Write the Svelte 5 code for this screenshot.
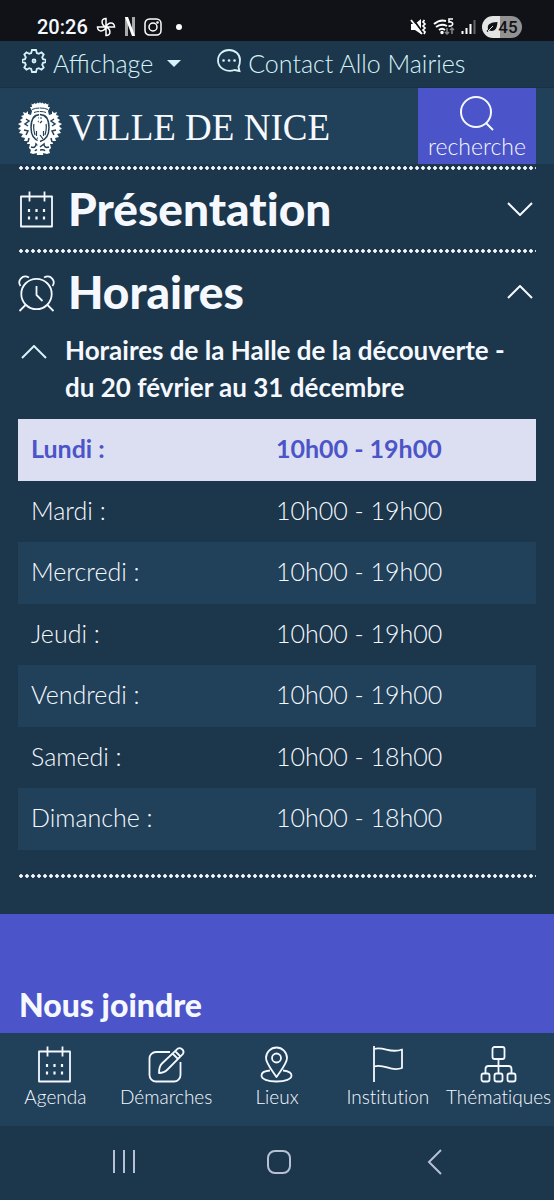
<script>
	let showPresentation = $state(false);
	let showHours = $state(true);
	let showPeriod = $state(true);

	const hours = [
		{ day: 'Lundi', time: '10h00 - 19h00', today: true },
		{ day: 'Mardi', time: '10h00 - 19h00' },
		{ day: 'Mercredi', time: '10h00 - 19h00' },
		{ day: 'Jeudi', time: '10h00 - 19h00' },
		{ day: 'Vendredi', time: '10h00 - 19h00' },
		{ day: 'Samedi', time: '10h00 - 18h00' },
		{ day: 'Dimanche', time: '10h00 - 18h00' }
	];

	const links = [
		{ name: 'Agenda', icon: 'calendar' },
		{ name: 'Démarches', icon: 'edit' },
		{ name: 'Lieux', icon: 'pin' },
		{ name: 'Institution', icon: 'flag' },
		{ name: 'Thématiques', icon: 'tree' }
	];
</script>

{#snippet icon(name)}
	<svg class="icon" viewBox="0 0 38 38" aria-hidden="true">
		{#if name === 'calendar'}
			<path d="M3 6.500h31v30H3zM11.500 1.500v10M26.500 1.500v10" />
			<path stroke-width="2.200" d="M11 19v3M18.500 19v3M26 19v3M11 26.500v3M18.500 26.500v3M26 26.500v3" />
		{:else if name === 'clock'}
			<circle cx="18.500" cy="21" r="15.200" />
			<path d="M18.500 13v9l6 6M7.500 32l-6 6M29.500 32l6 6M2.500 13C-1 8 4 1 11 4.500M34.500 13C38 8 33 1 26 4.500" />
		{:else if name === 'edit'}
			<path d="M23 7H9a6.500 6.500 0 0 0-6.500 6.500V30A6.500 6.500 0 0 0 9 36.500h18a6.500 6.500 0 0 0 6.500-6.500V17" />
			<path d="M12 28c0-5 .500-7 3-9.500L30.500 3.800c3-2 7.500 1.500 5.500 5L20.500 24.500C18 27 16 28 12 28zM25.500 8.500l5.500 5.500M28 6l5.500 5.500" />
		{:else if name === 'pin'}
			<path d="M18.500 32C14 25 8 18.500 8 13a10.500 10.500 0 0 1 21 0c0 5.500-6 12-10.500 19z" />
			<circle cx="18.500" cy="13" r="4.500" />
			<path d="M12 25.500C6 26 3.500 28 3.500 30.500c0 3.500 6 6 15 6s15-2.500 15-6c0-2.500-3-4.500-8.500-5" />
		{:else if name === 'flag'}
			<path d="M5 1v36M5 4c10-3 16 5 28 .500v18.500C21 27.500 16 18 5 21.500" />
		{:else if name === 'tree'}
			<rect x="12.500" y="2" width="12" height="12" rx="2" />
			<rect x="1.500" y="28.500" width="8" height="8" rx="2" />
			<rect x="14.500" y="28.500" width="8" height="8" rx="2" />
			<rect x="27.500" y="28.500" width="8" height="8" rx="2" />
			<path d="M18.500 14v14.500M5.500 28.500V24q0-3 3-3h20q3 0 3 3v4.500" />
		{/if}
	</svg>
{/snippet}

{#snippet chevron(open)}
	<svg class="chevron" class:open viewBox="0 0 26 14" aria-hidden="true"><path d="M1 1l12 12L25 1" /></svg>
{/snippet}

{#snippet crestHalf()}
	<path fill="#fff" d="M22.200 0l-1.200 1.500L19.500.500 18 2 16.500 1 15 2.500 13.500 1.500 14 5l-2 0 2 4-1 4-3-1 0-3-2 2-3-1 1 3-3 1 2 2-3 2 2 2-4 2 3 2-3 3 3 1-2 3 4 1-2 3 4 1-1 3 4 0-1 3 3 0-1 4 2 2-1 3 3 1 4-1 3 2h3.200z" />
	<path class="cut" d="M22 6q-5 0-8 1.500M22 9.500q-4 0-6 1M18 12.500l-3 3" />
	<path class="cut" stroke-width="1.500" d="M8 17l3 2-4 3 3 2M6 28l4 1-2 4M11 36l-1 4" />
	<path class="cut" stroke-width="1.500" d="M22 12.500C16 13 13 18 13 25.500S16 38 22 39.500" />
	<path class="cut" stroke-width="1.200" d="M16 22c-1 4 0 7 1 11M18.500 29v5M22 33l-3 4M20 19l2 2M22 16h-2" />
	<path class="cut" stroke-width="1.500" d="M13 45c3 1 5 0 5-3l4 3M22 48c-3 0-4-1-5 1" />
{/snippet}

<div class="page">
	<div class="status">
		<span class="time">20:26</span>
		<svg width="20" height="20" viewBox="0 0 20 20" fill="none" stroke="#fff" stroke-width="1.500" aria-hidden="true">
			<path d="M10 10V1.500C4.500 1.500 5 8 10 10zM10 10h8.500C18.500 4.500 12 5 10 10zM10 10v8.500C15.500 18.500 15 12 10 10zM10 10H1.500C1.500 15.500 8 15 10 10z" />
		</svg>
		<svg width="12" height="19" viewBox="0 0 12 19" aria-hidden="true">
			<path fill="#aaa" d="M1 0h3v19H1zM8 0h3v19H8z" /><path fill="#fff" d="M1 0h3l7 19H8z" />
		</svg>
		<svg width="18" height="18" viewBox="0 0 18 18" fill="none" stroke="#fff" stroke-width="1.500" aria-hidden="true">
			<rect x="1" y="1" width="16" height="16" rx="4.500" /><circle cx="9" cy="9" r="4" /><circle cx="13.500" cy="4.500" r=".6" />
		</svg>
		<span class="more"></span>
		<div class="signals">
			<svg width="17" height="18" viewBox="0 0 17 18" aria-hidden="true">
				<path fill="#fff" d="M1 6h4l6-5v15l-6-4H1z" />
				<path stroke="#111217" stroke-width="2" d="M3 1l10 14" /><path stroke="#fff" stroke-width="1.800" d="M1 2l11 14" />
				<path fill="none" stroke="#fff" stroke-width="1.700" d="M14.500 2l-1.500 2 2 2-2 2 2 2-2 2 2 2-1 2" />
			</svg>
			<svg width="22" height="18" viewBox="0 0 22 18" fill="none" stroke="#fff" stroke-width="1.900" aria-hidden="true">
				<path d="M1 6q6-5 12-3M3 9q5-4 11-1M6 12q3-2.500 6 0" /><circle cx="9" cy="14.500" r=".8" fill="#fff" />
				<path stroke-width="1.600" d="M20 1h-4v3c5-1 5 5-.500 4" />
				<path stroke="#888" stroke-width="1.500" d="M14 10v6m-2-2 2 2 2-2M19 16v-6m-2 2 2-2 2 2" />
			</svg>
			<svg width="15" height="16" viewBox="0 0 15 16" stroke="#fff" stroke-width="2" aria-hidden="true">
				<path d="M1.500 12v3M5.500 9v6M9.500 5v10" /><path stroke="#666" d="M13.500 1v14" />
			</svg>
			<span class="battery">
				<svg width="12" height="12" viewBox="0 0 12 12" aria-hidden="true"><path fill="#111217" d="M11.500 1C11 9 8 11 3 9.500L1.500 11 .500 10 2 8.500C1 3 4 1.500 11.500 1z" /><path stroke="#ddd" fill="none" d="M2 10l5-5" /></svg>45</span>
		</div>
	</div>

	<div class="topbar">
		<button class="display">
			<svg width="24" height="24" viewBox="0 0 24 24" aria-hidden="true">
				<path d="M10 1h4l.8 3 2 .8 2.700-1.500 2.200 2.200-1.500 2.700.8 2 3 .8v2l-3 .8-.8 2 1.500 2.700-2.200 2.200-2.700-1.500-2 .8-.8 3h-4l-.8-3-2-.8-2.700 1.500-2.200-2.200 1.500-2.700-.8-2-3-.8v-2l3-.8.8-2-1.500-2.700 2.200-2.200 2.700 1.500 2-.8z" />
				<circle cx="12" cy="12" r="1.500" />
			</svg>
			Affichage
			<span class="caret"></span>
		</button>
		<a class="contact" href="#contact">
			<svg width="24" height="24" viewBox="0 0 24 24" aria-hidden="true">
				<path d="M22.500 22l-5-1C10 23.500 1 19.500 1 11.500 1 5 6 1 12 1s11 4 11 10c0 3-.500 5-1.500 7z" />
				<path stroke-width="2.600" stroke-linecap="round" d="M6.500 11.500h.1M12 11.500h.1M17.500 11.500h.1" />
			</svg>
			Contact Allo Mairies
		</a>
	</div>

	<header>
		<a class="logo" href="#accueil">
			<svg width="44" height="53" viewBox="0 0 44 53" aria-hidden="true">
				{@render crestHalf()}
				<g transform="translate(44 0) scale(-1 1)">
					{@render crestHalf()}
				</g>
			</svg>
			<span>VILLE DE NICE</span>
		</a>
		<button class="search">
			<svg width="36" height="36" viewBox="0 0 36 36" aria-hidden="true"><circle cx="17" cy="16" r="15" /><path d="M27 27l7 7" /></svg>
			recherche
		</button>
	</header>

	<main>
		<section>
			<h2>
				<button class="title" aria-expanded={showPresentation} onclick={() => (showPresentation = !showPresentation)}>
					{@render icon('calendar')}
					<span>Présentation</span>
					{@render chevron(showPresentation)}
				</button>
			</h2>
		</section>
		<section class="hours">
			<h2>
				<button class="title" aria-expanded={showHours} onclick={() => (showHours = !showHours)}>
					{@render icon('clock')}
					<span>Horaires</span>
					{@render chevron(showHours)}
				</button>
			</h2>
			{#if showHours}
				<h3>
					<button class="period" aria-expanded={showPeriod} onclick={() => (showPeriod = !showPeriod)}>
						{@render chevron(showPeriod)}
						<span>Horaires de la Halle de la découverte - du 20 février au 31 décembre</span>
					</button>
				</h3>
				{#if showPeriod}
					<table>
						<tbody>
							{#each hours as row}
								<tr class:today={row.today}>
									<th scope="row">{row.day} :</th>
									<td>{row.time}</td>
								</tr>
							{/each}
						</tbody>
					</table>
				{/if}
			{/if}
		</section>
	</main>

	<div class="join">
		<h2>Nous joindre</h2>
	</div>

	<nav class="links">
		{#each links as link}
			<a href="#{link.icon}">
				{@render icon(link.icon)}
				<span>{link.name}</span>
			</a>
		{/each}
	</nav>

	<div class="system">
		<button aria-label="Applications récentes">
			<svg width="26" height="26" viewBox="0 0 26 26" aria-hidden="true"><path d="M4 1v23M14 1v23M24 1v23" /></svg>
		</button>
		<button aria-label="Accueil">
			<svg width="26" height="26" viewBox="0 0 26 26" aria-hidden="true"><rect x="2" y="2" width="22" height="22" rx="7" /></svg>
		</button>
		<button aria-label="Retour">
			<svg width="26" height="26" viewBox="0 0 26 26" aria-hidden="true"><path d="M19 1L7 13l12 12" /></svg>
		</button>
	</div>
</div>

<style>
	:global(body) {
		margin: 0;
		background: #1c364b;
	}

	.page {
		font-family: Lato, "Open Sans", sans-serif;
		font-size: 25px;
		font-weight: 300;
		color: #f5f9ff;
		background: #1c364b;
	}

	button {
		padding: 0;
		border: 0;
		background: none;
		font: inherit;
		color: inherit;
		cursor: pointer;
	}

	a {
		color: inherit;
		text-decoration: none;
	}

	h2,
	h3 {
		margin: 0;
		font: inherit;
	}

	svg {
		display: block;
		flex: none;
	}

	.status {
		display: flex;
		align-items: center;
		gap: 8px;
		height: 29px;
		padding: 12px 32px 0 37px;
		background: #111217;
	}

	.time {
		font: 500 20px/28px Roboto, sans-serif;
	}

	.more {
		width: 6px;
		height: 6px;
		margin-left: 6px;
		border-radius: 50%;
		background: #fff;
	}

	.signals {
		display: flex;
		align-items: center;
		gap: 6px;
		margin-left: auto;
	}

	.battery {
		display: flex;
		align-items: center;
		justify-content: center;
		width: 40px;
		height: 22px;
		border-radius: 11px;
		background: linear-gradient(90deg, #e4e4e4 45%, #929292 45%);
		color: #111217;
		font: 500 17px/22px Roboto, sans-serif;
	}

	.topbar {
		display: flex;
		gap: 36px;
		height: 44px;
		padding: 0 0 2px 22px;
		border-bottom: 1px solid #1a3145;
		color: #d5f3fa;
	}

	.display,
	.contact {
		display: flex;
		align-items: center;
		gap: 7px;
	}

	.topbar svg {
		margin-bottom: 4px;
	}

	.topbar svg,
	.search svg {
		fill: none;
		stroke: currentColor;
		stroke-width: 1.8;
	}

	.caret {
		margin-left: 7px;
		border: 7px solid transparent;
		border-top-color: currentColor;
		border-bottom: 0;
	}

	header {
		display: flex;
		justify-content: space-between;
		padding: 0 18px;
		background: #214059;
	}

	.logo {
		display: flex;
		align-items: center;
		gap: 7px;
		padding-top: 4px;
		font: 37px/50px "Liberation Serif", serif;
	}

	.cut {
		fill: none;
		stroke: #214059;
	}

	.search {
		display: flex;
		flex-direction: column;
		align-items: center;
		width: 118px;
		height: 76px;
		padding-top: 8px;
		background: #4b54c8;
		font-size: 23px;
		line-height: 28px;
	}

	.search svg {
		stroke-width: 2;
	}

	main {
		padding: 2px 18px 36px;
	}

	section {
		padding-top: 4px;
		background: radial-gradient(circle, #f5f9ff 1.5px, transparent 2px) 0 0 / 6px 4px repeat-x;
	}

	.hours {
		padding-bottom: 28px;
		background:
			radial-gradient(circle, #f5f9ff 1.5px, transparent 2px) 0 0 / 6px 4px repeat-x,
			radial-gradient(circle, #f5f9ff 1.5px, transparent 2px) 0 100% / 6px 4px repeat-x;
	}

	.title {
		display: flex;
		align-items: center;
		gap: 12px;
		width: 100%;
		height: 79px;
		padding: 0 3px 2px 0;
		text-align: left;
		font-size: 46px;
		font-weight: 900;
		line-height: 54px;
		font-variant-ligatures: none;
	}

	.title span {
		flex: 1;
	}

	.icon {
		width: 38px;
		height: 38px;
		overflow: visible;
		fill: none;
		stroke: currentColor;
		stroke-width: 1.8;
		stroke-linejoin: round;
	}

	.chevron {
		width: 26px;
		height: 14px;
		fill: none;
		stroke: currentColor;
		stroke-width: 2;
	}

	.open {
		transform: rotate(180deg);
	}

	.period {
		display: flex;
		gap: 18px;
		padding: 0 16px 13px 3px;
		text-align: left;
		font-size: 26px;
		font-weight: 700;
		line-height: 37px;
	}

	.period :global(.chevron) {
		margin-top: 13px;
		color: #d5f3fa;
	}

	table {
		width: 100%;
		border-collapse: collapse;
		table-layout: fixed;
	}

	tr {
		height: 62px;
		background: #214059;
	}

	tr:nth-child(even) {
		height: 61px;
		background: none;
	}

	tr.today {
		background: #dcdff2;
		color: #4b54c8;
		font-weight: 700;
	}

	th,
	td {
		padding: 0 13px 4px;
		text-align: left;
		font-weight: inherit;
	}

	th {
		width: 219px;
	}

	.join {
		padding: 70px 19px 7px;
		background: #4b54c8;
	}

	.join h2 {
		font-size: 32px;
		font-weight: 900;
		line-height: 42px;
	}

	.links {
		display: grid;
		grid-template-columns: repeat(5, 1fr);
		height: 81px;
		padding-top: 12px;
		background: #214059;
	}

	.links a {
		display: flex;
		flex-direction: column;
		align-items: center;
		gap: 2px;
		font-size: 19px;
		line-height: 24px;
		font-variant-ligatures: none;
	}

	.system {
		display: flex;
		justify-content: center;
		gap: 130px;
		padding: 23px 0 25px 3px;
		color: #b7c1d6;
	}

	.system svg {
		fill: none;
		stroke: currentColor;
		stroke-width: 2;
	}
</style>
